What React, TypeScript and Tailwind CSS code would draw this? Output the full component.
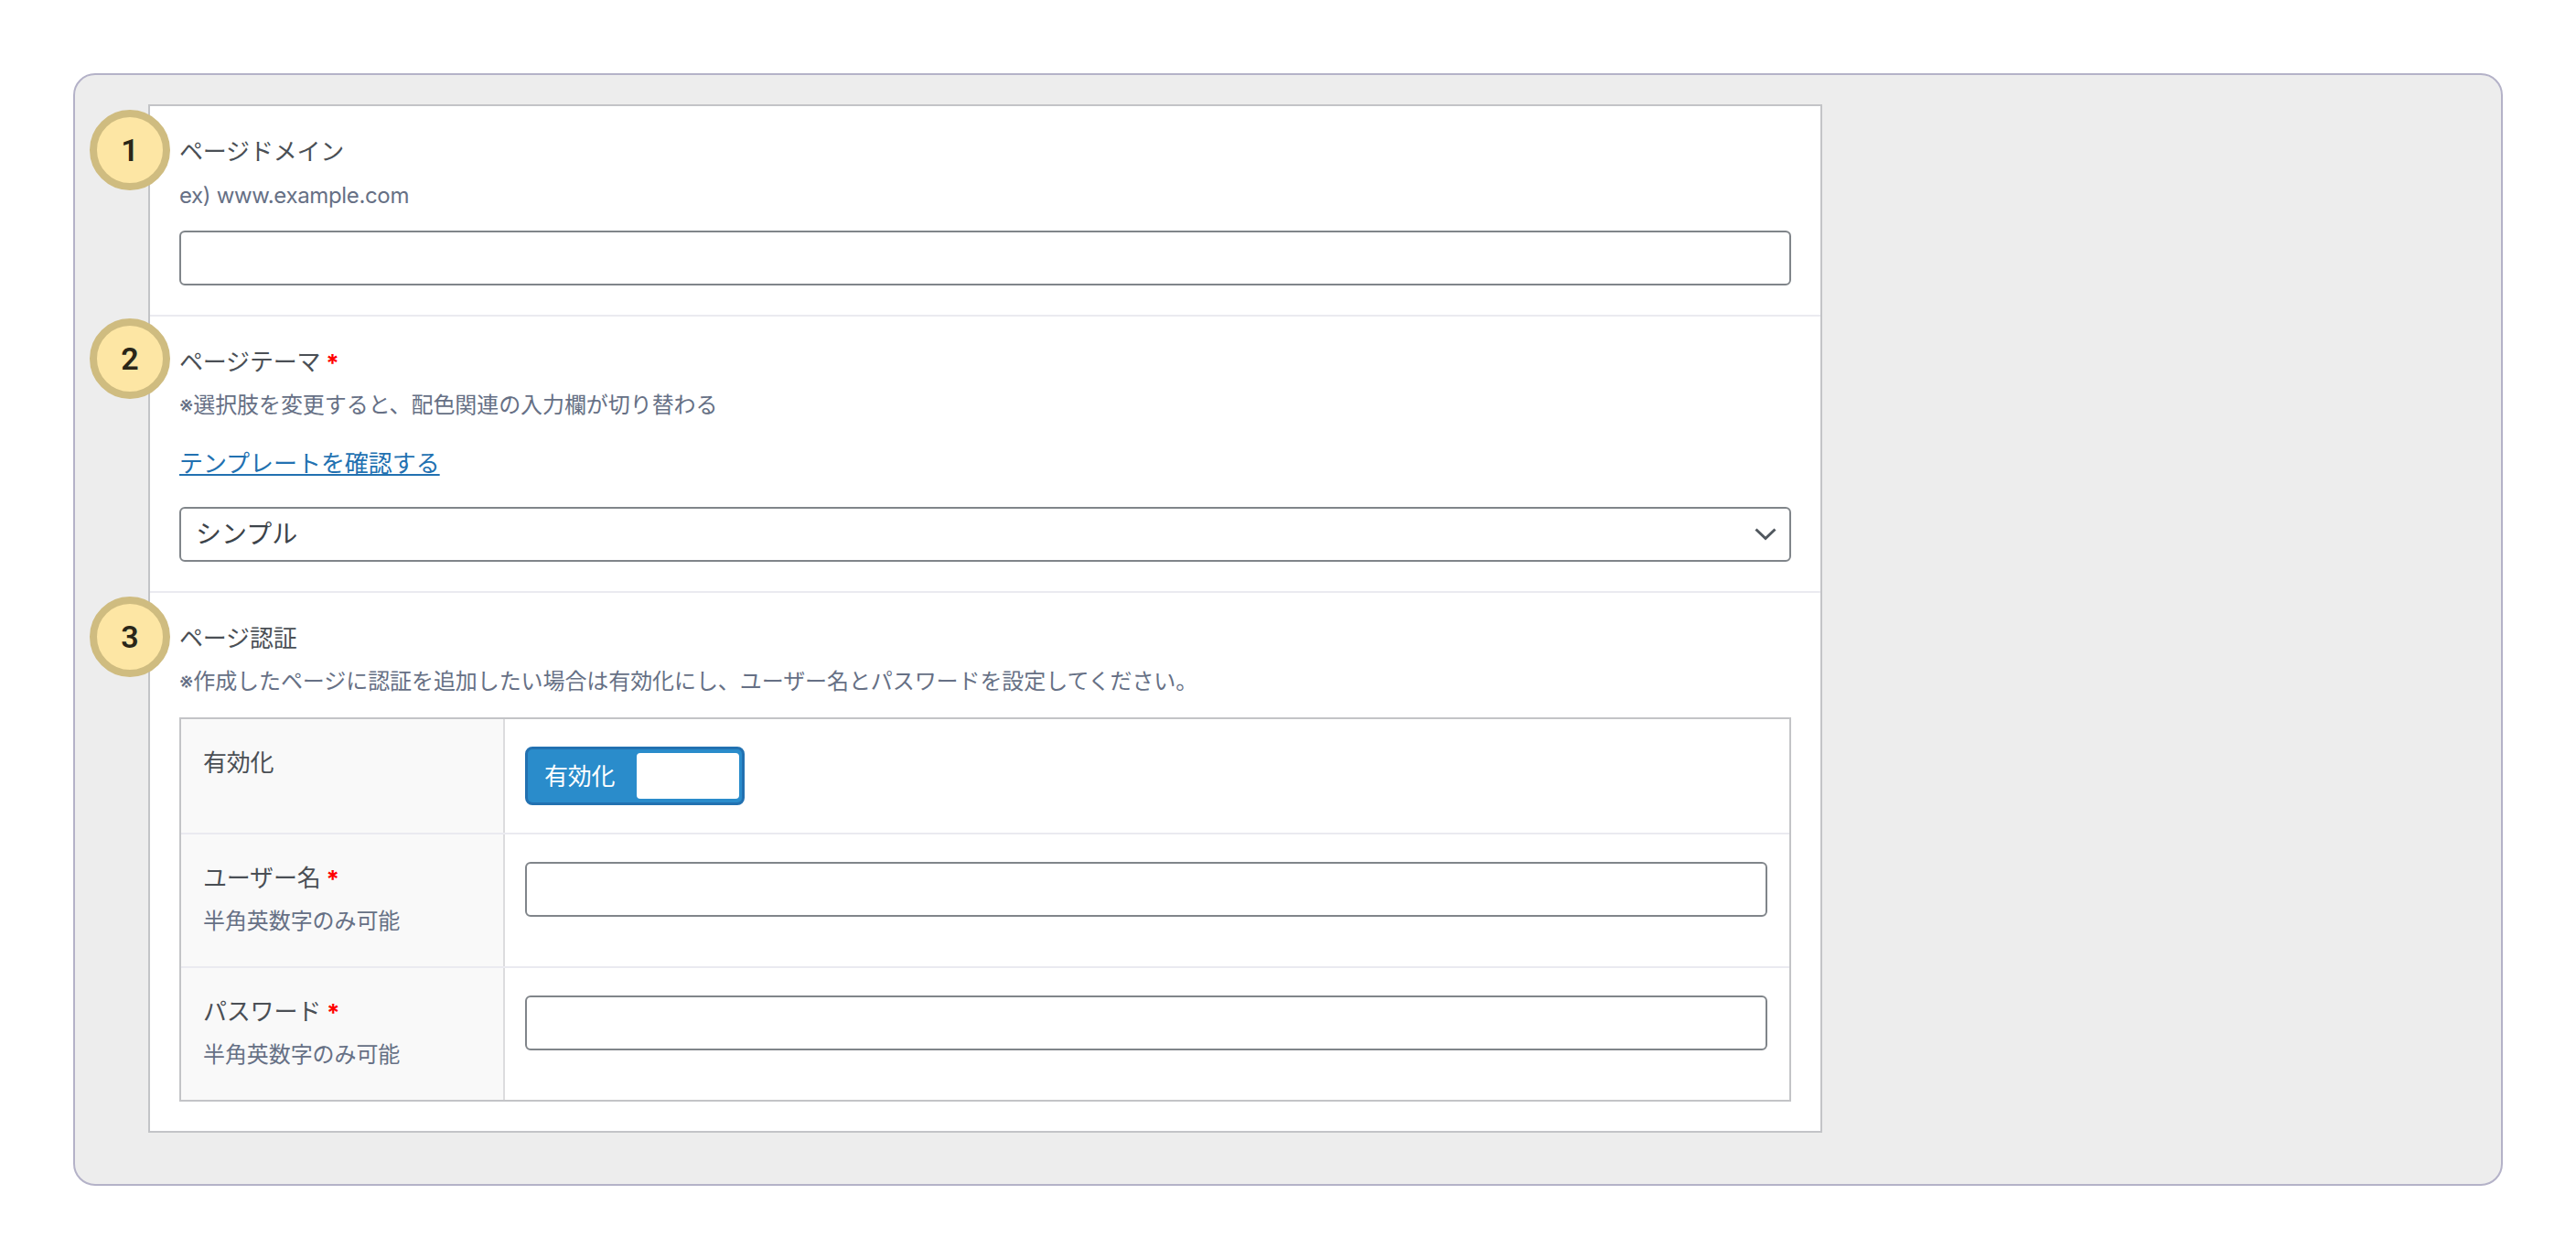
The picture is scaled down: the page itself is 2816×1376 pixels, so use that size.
const labelCls = 'text-[26px] leading-[28px] tracking-[-0.2px] text-[#4a4f55]';
const descCls = 'text-[24px] leading-[28px] tracking-[-0.08px] text-[#667085]';
const inputCls = 'block h-[60px] w-full rounded-[6px] border-2 border-[#80858a] bg-white';

function Required() {
  return <span className="relative top-[1px] ml-[6px] font-bold text-[#ff0000]">*</span>;
}

function Badge({ n, top }: { n: number; top: string }) {
  return (
    <div className={`absolute left-[-66px] ${top} flex h-[88px] w-[88px] items-center justify-center rounded-full border-[8px] border-[#cfbc80] bg-[#fde6a4] font-['Roboto',sans-serif] text-[34px] font-semibold text-[#2a2618]`}>
      {n}
    </div>
  );
}

function Note({ children }: { children: React.ReactNode }) {
  return <p className={descCls}>{children}</p>;
}

function Row({ label, required, sub, children, className }: { label: string; required?: boolean; sub?: string; children: React.ReactNode; className: string }) {
  return (
    <div className={`flex ${className}`}>
      <div className="w-[354px] shrink-0 border-r-2 border-[#dcdcde] bg-[#f9f9f9] pl-[24px] pt-[34px]">
        <div className={labelCls}>
          {label}
          {required && <Required />}
        </div>
        {sub && <div className={`mt-[19px] ${descCls}`}>{sub}</div>}
      </div>
      <div className="flex-1 pl-[22px] pr-[24px] pt-[30px]">{children}</div>
    </div>
  );
}

export default function App() {
  return (
    <div className="min-h-screen bg-white pl-[80px] pt-[80px] font-['Inter','Noto_Sans_CJK_JP',sans-serif]">
      <div className="h-[1216px] w-[2656px] rounded-[24px] border-2 border-[#b4b2c8] bg-[#ededed] pl-[80px] pt-[32px]">
        <div className="w-[1830px] border-2 border-[#c3c4c7] bg-white">
          {/* page domain */}
          <section className="relative border-b-2 border-[#eaeaf0] px-[32px] pb-[32px] pt-[36px]">
            <Badge n={1} top="top-[4px]" />
            <div className={labelCls}>ページドメイン</div>
            <p className="mt-[20px] text-[24px] leading-[28px] tracking-[-0.35px] text-[#667085]">ex) www.example.com</p>
            <input className={`mt-[24px] ${inputCls}`} />
          </section>

          {/* page theme */}
          <section className="relative border-b-2 border-[#eaeaf0] px-[32px] pb-[32px] pt-[36px]">
            <Badge n={2} top="top-[2px]" />
            <div className={labelCls}>
              ページテーマ
              <Required />
            </div>
            <div className="mt-[19px]">
              <Note>※選択肢を変更すると、配色関連の入力欄が切り替わる</Note>
            </div>
            <a href="#" className="mt-[36px] block w-fit text-[26px] leading-[28px] tracking-[-0.05px] text-[#2271b1] underline">
              テンプレートを確認する
            </a>
            <div className="mt-[33px] flex h-[60px] items-center justify-between rounded-[6px] border-2 border-[#80858a] bg-white pl-[16px] pr-[14px] text-[28px] text-[#3c434a]">
              シンプル
              <svg width="24" height="14" viewBox="0 0 24 14" fill="none" stroke="#50575e" strokeWidth="3">
                <path d="M1.5 1.5L12 11.5L22.5 1.5" />
              </svg>
            </div>
          </section>

          {/* page auth */}
          <section className="relative px-[32px] pb-[32px] pt-[36px]">
            <Badge n={3} top="top-[4px]" />
            <div className={labelCls}>ページ認証</div>
            <div className="mt-[19px]">
              <Note>※作成したページに認証を追加したい場合は有効化にし、ユーザー名とパスワードを設定してください。</Note>
            </div>
            <div className="mt-[25px] border-2 border-[#c3c4c7]">
              <Row label="有効化" className="h-[126px] border-b-2 border-[#eaeaf0]">
                <div className="flex h-[64px] w-[240px] items-center rounded-[8px] border-[3px] border-[#2271b1] bg-[#2a8ccb] pl-[18px] pr-[3px]">
                  <span className="flex-1 text-[26px] tracking-[-0.2px] text-white">有効化</span>
                  <span className="h-[50px] w-[112px] rounded-[4px] bg-white" />
                </div>
              </Row>
              <Row label="ユーザー名" required sub="半角英数字のみ可能" className="h-[146px] border-b-2 border-[#eaeaf0]">
                <input className={inputCls} />
              </Row>
              <Row label="パスワード" required sub="半角英数字のみ可能" className="h-[144px]">
                <input className={inputCls} />
              </Row>
            </div>
          </section>
        </div>
      </div>
    </div>
  );
}
